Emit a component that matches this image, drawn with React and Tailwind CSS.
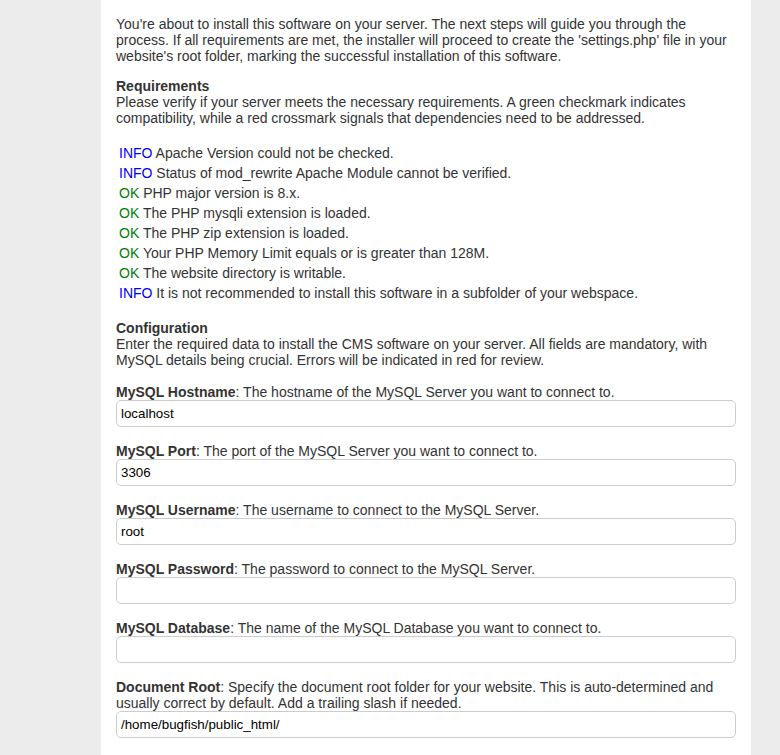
import React from "react";

const checks = [
    { type: "INFO", text: "Apache Version could not be checked." },
    { type: "INFO", text: "Status of mod_rewrite Apache Module cannot be verified." },
    { type: "OK", text: "PHP major version is 8.x." },
    { type: "OK", text: "The PHP mysqli extension is loaded." },
    { type: "OK", text: "The PHP zip extension is loaded." },
    { type: "OK", text: "Your PHP Memory Limit equals or is greater than 128M." },
    { type: "OK", text: "The website directory is writable." },
    { type: "INFO", text: "It is not recommended to install this software in a subfolder of your webspace." },
];

const fields = [
    { label: "MySQL Hostname", desc: "The hostname of the MySQL Server you want to connect to.", value: "localhost" },
    { label: "MySQL Port", desc: "The port of the MySQL Server you want to connect to.", value: "3306" },
    { label: "MySQL Username", desc: "The username to connect to the MySQL Server.", value: "root" },
    { label: "MySQL Password", desc: "The password to connect to the MySQL Server.", value: "" },
    { label: "MySQL Database", desc: "The name of the MySQL Database you want to connect to.", value: "" },
    {
        label: "Document Root",
        desc: "Specify the document root folder for your website. This is auto-determined and usually correct by default. Add a trailing slash if needed.",
        value: "/home/bugfish/public_html/",
    },
];

export default function App() {
    return (
        <div className="min-h-screen bg-[#ececec] font-['Liberation_Sans',Arial,sans-serif] text-[14px] leading-[normal] text-[#333]">
            <div className="ml-[101px] w-[650px] bg-white px-[15px] pt-[16px] pb-[30px]">
                {/* Intro */}
                <p>
                    You're about to install this software on your server. The next steps will guide you through the
                    process. If all requirements are met, the installer will proceed to create the 'settings.php' file in your
                    website's root folder, marking the successful installation of this software.
                </p>

                {/* Requirements */}
                <div className="mt-[14px]">
                    <div className="font-bold">Requirements</div>
                    <p>
                        Please verify if your server meets the necessary requirements. A green checkmark indicates
                        compatibility, while a red crossmark signals that dependencies need to be addressed.
                    </p>
                </div>

                <div className="mt-[17px] pl-[3px]">
                    {checks.map((c, i) => (
                        <div key={i} className="leading-[20px]">
                            <span className={c.type === "OK" ? "text-[#008000]" : "text-[#0000ff]"}>{c.type}</span>{" "}
                            {c.text}
                        </div>
                    ))}
                </div>

                {/* Configuration */}
                <div className="mt-[17px]">
                    <div className="font-bold">Configuration</div>
                    <p>
                        Enter the required data to install the CMS software on your server. All fields are mandatory, with
                        MySQL details being crucial. Errors will be indicated in red for review.
                    </p>
                </div>

                <div className="mt-[16px] flex flex-col gap-[16px]">
                    {fields.map((f, i) => (
                        <div key={i}>
                            <div>
                                <span className="font-bold">{f.label}</span>: {f.desc}
                            </div>
                            <input
                                type="text"
                                defaultValue={f.value}
                                className="block h-[27px] w-full rounded-[5px] border border-[#ccc] bg-white px-[4px] text-[13.33px] text-black outline-none"
                            />
                        </div>
                    ))}
                </div>
            </div>
        </div>
    );
}
